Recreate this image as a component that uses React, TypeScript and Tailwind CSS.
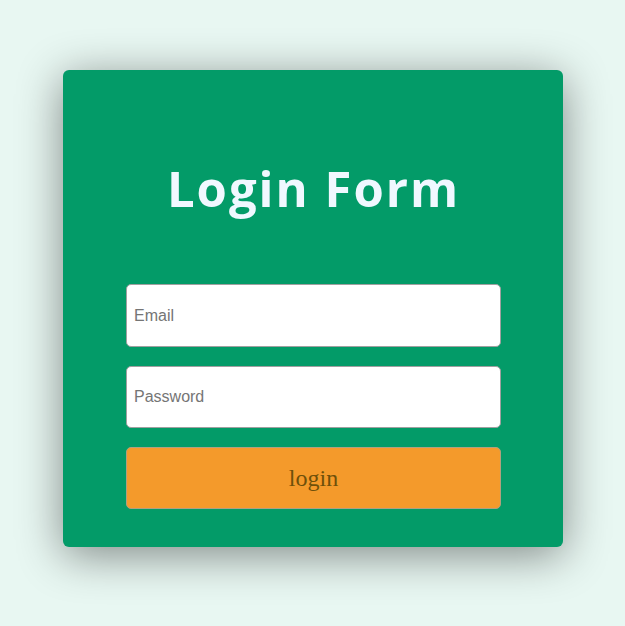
export default function App() {
  return (
    <div className="w-[625px] h-[626px] bg-[#e8f7f2] pt-[70px] pl-[63px]">
      <div className="w-[500px] h-[477px] bg-[#039b68] rounded-[6px] shadow-[0_8px_45px_rgba(0,0,0,0.45)] flex flex-col items-start pl-[63px]">
        <h1 className="mt-[88px] w-[375px] text-center h-[60px] leading-[60px] text-[49px] tracking-[2px] font-bold text-[#f0f8ff] [font-family:'Open_Sans',sans-serif]">
          Login Form
        </h1>
        <input
          placeholder="Email"
          className="mt-[66px] w-[375px] h-[63px] bg-white border border-[#a0a0a0] rounded-[5px] px-[7px] text-[16px] text-black placeholder:text-[#757575] [font-family:'Liberation_Sans',sans-serif] outline-none"
        />
        <input
          placeholder="Password"
          type="password"
          className="mt-[19px] w-[375px] h-[62px] bg-white border border-[#a0a0a0] rounded-[5px] px-[7px] text-[16px] text-black placeholder:text-[#757575] [font-family:'Liberation_Sans',sans-serif] outline-none"
        />
        <button className="mt-[19px] w-[375px] h-[62px] bg-[#f49a2b] border border-[#b0a080] rounded-[5px] text-[24px] text-[#6e500a] [font-family:'Liberation_Serif',serif]">
          login
        </button>
      </div>
    </div>
  );
}
